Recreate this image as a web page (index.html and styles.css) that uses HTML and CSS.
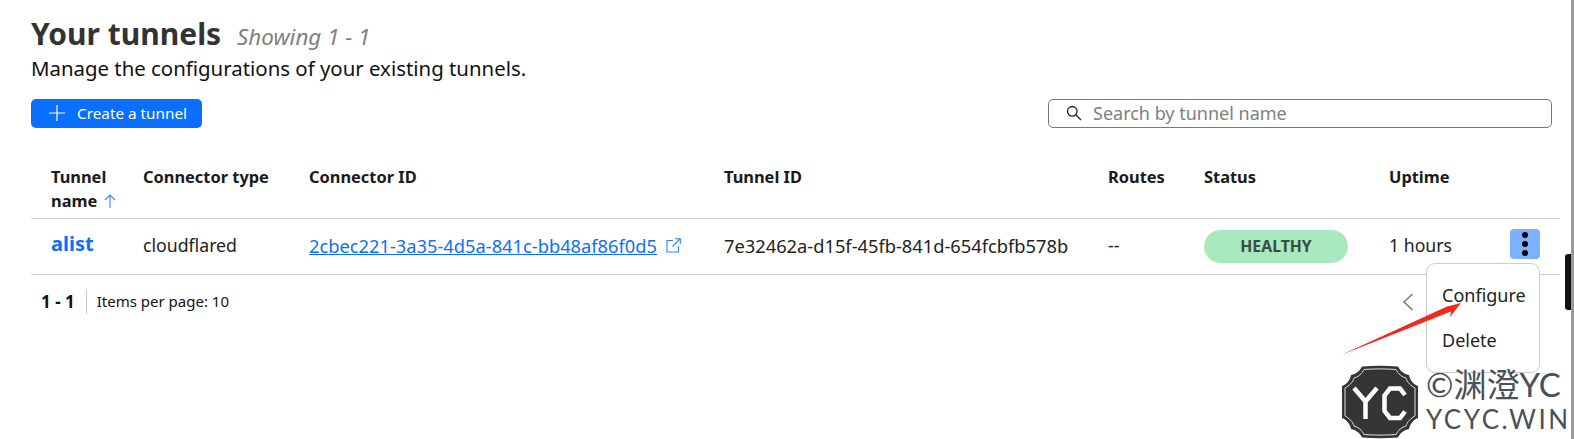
FILE: index.html
```html
<!DOCTYPE html>
<html lang="en">
<head>
<meta charset="utf-8">
<title>Your tunnels</title>
<link rel="stylesheet" href="styles.css">
</head>
<body>
<main class="page">
  <header class="head">
    <h1 class="title">Your tunnels <em class="count">Showing 1 - 1</em></h1>
    <p class="sub">Manage the configurations of your existing tunnels.</p>
  </header>
  <div class="toolbar">
    <button class="create"><svg class="plus" viewBox="0 0 16 16"><path d="M8 0v16M0 8h16"/></svg>Create a tunnel</button>
    <label class="search"><svg class="lens" viewBox="0 0 16 16"><circle cx="6.300" cy="6.300" r="4.800"/><path d="M9.800 9.800 15 15"/></svg><span>Search by tunnel name</span></label>
  </div>
  <div class="table">
    <div class="row hrow">
      <div>Tunnel<br>name <svg class="sort" viewBox="0 0 12 14"><path d="M6 14V1M1 6l5-5 5 5"/></svg></div>
      <div>Connector type</div>
      <div>Connector ID</div>
      <div>Tunnel ID</div>
      <div>Routes</div>
      <div>Status</div>
      <div>Uptime</div>
      <div></div>
    </div>
    <div class="row brow">
      <div class="name">alist</div>
      <div>cloudflared</div>
      <div class="conn"><a href="#">2cbec221-3a35-4d5a-841c-bb48af86f0d5</a><svg class="ext" viewBox="0 0 15 15"><path d="M7 2.500H1v11.500h11.500V8M9 .7h5.300V6M14.300 .7 6.500 8.500"/></svg></div>
      <div class="tid">7e32462a-d15f-45fb-841d-654fcbfb578b</div>
      <div>--</div>
      <div><span class="pill">HEALTHY</span></div>
      <div>1 hours</div>
      <div class="act"><button class="kebab"><i></i><i></i><i></i></button></div>
    </div>
  </div>
  <div class="foot">
    <b class="range">1 - 1</b>
    <span class="per">Items per page: 10</span>
    <svg class="prev" viewBox="0 0 12 18"><path d="M10.500 1 2 9l8.500 8"/></svg>
  </div>
</main>
<div class="menu">
  <div>Configure</div>
  <div>Delete</div>
</div>
<svg class="arrow" viewBox="0 0 130 60"><polygon points="0,58 106,9.500 120,6 109,20 110,14.500"/></svg>
<div class="mark">
  <svg class="badge" viewBox="0 0 76 74">
    <path class="b1" d="M20 1.500C32 .5 44 .5 56 1.500 58 6 62 9 67 10 68 15 71 19 76 21V53C71 55 68 59 67 64 62 65 58 68 56 72.500 44 73.500 32 73.500 20 72.500 18 68 14 65 9 64 8 59 5 55 0 53V21C5 19 8 15 9 10 14 9 18 6 20 1.500z"/>
    <path class="b2" d="M22 4.500C32 3.700 44 3.700 54 4.500 56 9 60 12 64 13 65 17 69 21 73 23V51C69 53 65 57 64 61 60 62 56 65 54 69.500 44 70.300 32 70.300 22 69.500 20 65 16 62 12 61 11 57 7 53 3 51V23C7 21 11 17 12 13 16 12 20 9 22 4.500z"/>
    <path class="b3" d="M12 23l11.500 13.500L35 23M23.500 36.500V54M63 30l-5-6.500H48l-5.500 7v15.500l5.500 7h10l5-6.500"/>
  </svg>
  <div class="mtext">
    <div class="m1">©渊澄YC</div>
    <div class="m2">YCYC.WIN</div>
  </div>
</div>
<div class="edge"></div>
<div class="strip"></div>
</body>
</html>
```
FILE: styles.css
```css
* { box-sizing: border-box; }
html, body { margin: 0; height: 439px; overflow: hidden; background: #fff; }
body { font-family: "Noto Sans", "Noto Sans CJK SC", sans-serif; color: #111; position: relative; }
.page { padding: 15px 14px 0 31px; }
.head { height: 84px; }
.title { margin: 0; font-size: 30px; line-height: 37px; font-weight: 700; color: #333; }
.count { font-size: 22.400px; font-weight: 400; color: #808080; margin-left: 8px; }
.sub { margin: 1px 0 0; font-size: 20.400px; line-height: 25px; color: #111; }
.toolbar { display: flex; justify-content: space-between; height: 29px; margin-right: 8px; }
.create { display: flex; align-items: center; width: 171px; height: 29px; padding: 0 0 2px 18px; border: 0; border-radius: 5px; background: #0a6fff; color: #fff; font: 400 15.300px "Noto Sans", sans-serif; }
.plus { width: 16px; height: 16px; margin-right: 12px; fill: none; stroke: #fff; stroke-width: 1.200; }
.search { display: flex; align-items: center; width: 504px; height: 29px; padding: 0 0 2px 17px; border: 1px solid #777; border-radius: 5px; font-size: 18px; color: #808080; }
.lens { width: 16px; height: 16px; margin-right: 11px; fill: none; stroke: #222; stroke-width: 1.300; }
.table { margin-top: 29px; }
.row { display: grid; grid-template-columns: 92px 166px 415px 384px 96px 185px 121px 1fr; padding-left: 20px; border-bottom: 1px solid #ccc; }
.hrow { height: 62px; font-size: 16.400px; line-height: 24px; font-weight: 700; padding-top: 8px; color: #1a1a1a; }
.sort { width: 12px; height: 14px; margin-left: 2px; fill: none; stroke: #3b82f6; stroke-width: 1.100; vertical-align: -1px; }
.brow { height: 56px; align-items: center; font-size: 17.700px; color: #222; padding-bottom: 3px; }
.name { font-size: 20px; font-weight: 700; color: #0a6fff; margin-top: -3px; }
.conn { display: flex; align-items: center; font-size: 18.300px; }
.tid { font-size: 18.300px; }
.conn a { color: #0a6fff; text-decoration: underline; }
.ext { width: 15px; height: 15px; margin-left: 9px; fill: none; stroke: #2b7fff; stroke-width: 1.100; }
.pill { display: block; width: 144px; height: 33px; margin-top: 2px; line-height: 32px; border-radius: 17px; background: #a9e9c0; color: #3d4a45; font-size: 15.800px; font-weight: 700; text-align: center; }
.act { display: flex; }
.kebab { display: flex; flex-direction: column; align-items: center; justify-content: center; gap: 3px; width: 30px; height: 30px; margin-top: -3px; padding: 0; border: 0; border-radius: 4px; background: #7db1ff; }
.kebab i { width: 6px; height: 6px; border-radius: 50%; background: #000; }
.foot { display: flex; align-items: center; height: 52px; padding-left: 10px; position: relative; font-size: 15px; }
.range { font-weight: 700; font-size: 17px; padding-right: 11px; border-right: 1px solid #ccc; line-height: 25px; }
.per { margin-left: 10px; }
.prev { position: absolute; left: 1371px; top: 18px; width: 12px; height: 18px; fill: none; stroke: #777; stroke-width: 1.500; }
.menu { position: absolute; left: 1426px; top: 263px; width: 114px; height: 110px; padding: 9px 0 0 15px; background: #fff; border: 1px solid #ccc; border-radius: 9px; font-size: 18px; line-height: 45px; color: #222; }
.arrow { position: absolute; left: 1341px; top: 297px; width: 130px; height: 60px; fill: #f5281e; }
.mark { position: absolute; left: 1342px; top: 365px; display: flex; }
.badge { width: 76px; height: 74px; }
.b1 { fill: #353535; }
.b2 { fill: none; stroke: #ddd; stroke-width: 1; }
.b3 { fill: none; stroke: #fff; stroke-width: 4.500; }
.mtext { margin-left: 8px; color: #4a5058; white-space: nowrap; font-family: Lato, "Noto Sans CJK SC", sans-serif; font-weight: 400; }
.m1 { font-size: 33px; line-height: 38px; }
.m2 { font-size: 26px; line-height: 32px; letter-spacing: 2.600px; }
.edge { position: absolute; right: 3px; top: 254px; width: 6px; height: 56px; background: #111; border-radius: 3px 0 0 3px; }
.strip { position: absolute; right: 0; top: 0; bottom: 0; width: 3px; background: #999; }
```
